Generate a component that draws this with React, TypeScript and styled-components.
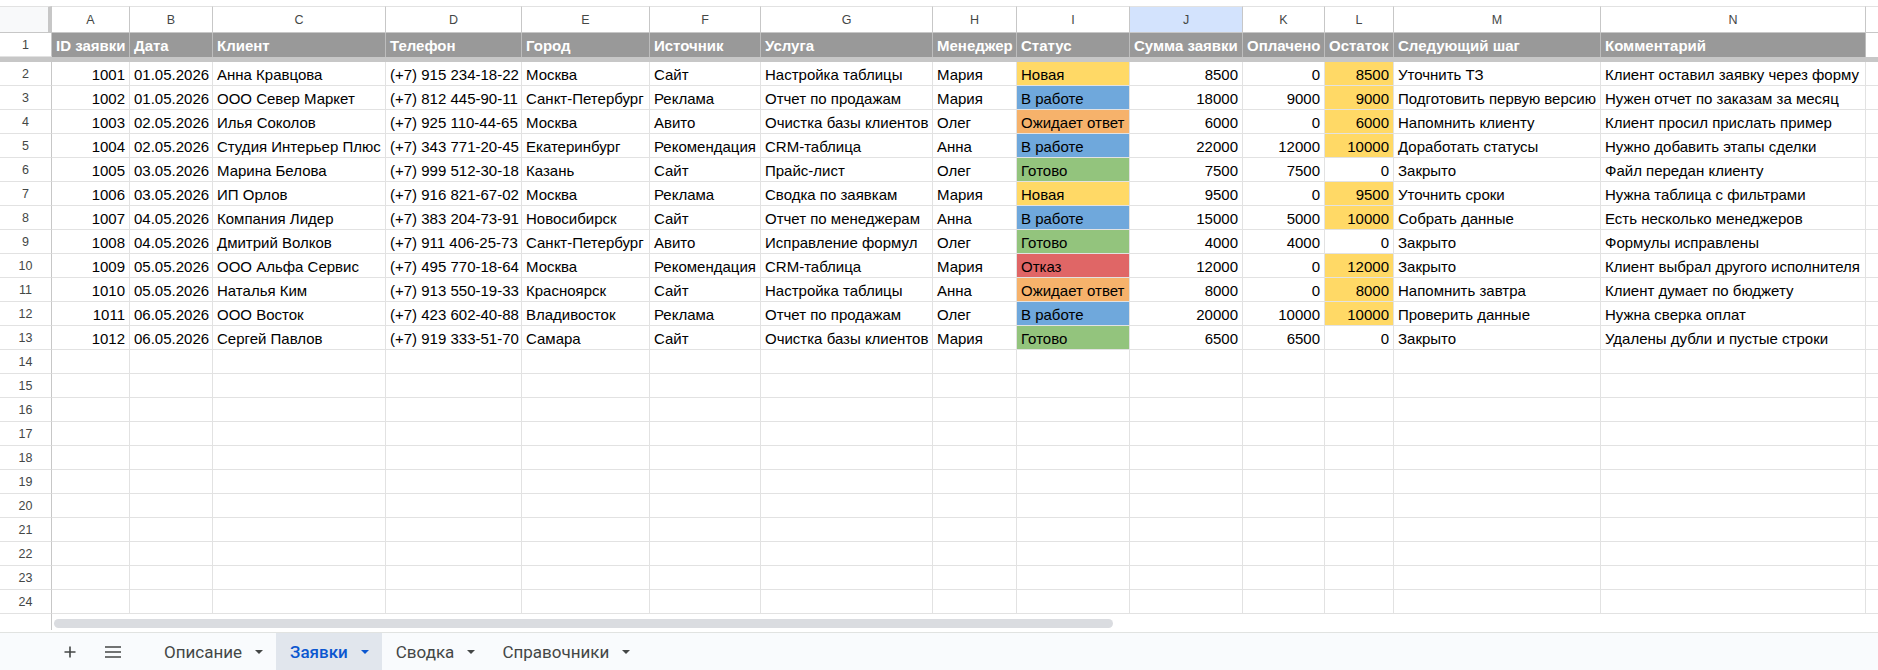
import React from "react"
import styled, { createGlobalStyle } from "styled-components"

const GlobalStyle = createGlobalStyle`
  html, body {
    margin: 0;
    padding: 0;
    background: #ffffff;
  }
  body {
    font-family: "Liberation Sans", Arial, sans-serif;
    overflow: hidden;
  }
`

type Status = "Новая" | "В работе" | "Ожидает ответ" | "Готово" | "Отказ"

type Deal = {
    id: number
    date: string
    client: string
    phone: string
    city: string
    source: string
    service: string
    manager: string
    status: Status
    sum: number
    paid: number
    next: string
    comment: string
}

const statusColors: Record<Status, string> = {
    "Новая": "#ffd966",
    "В работе": "#6fa8dc",
    "Ожидает ответ": "#f6b26b",
    "Готово": "#93c47d",
    "Отказ": "#e06666",
}

const debtColor = "#ffd966"

// last column only peeks out past the right edge, so its letter stays off screen
const letters = ["A", "B", "C", "D", "E", "F", "G", "H", "I", "J", "K", "L", "M", "N", ""]
const widths = [78, 83, 173, 136, 128, 111, 172, 84, 113, 113, 82, 69, 207, 265, 100]
const selectedColumn = "J"

const titles = [
    "ID заявки", "Дата", "Клиент", "Телефон", "Город", "Источник", "Услуга", "Менеджер",
    "Статус", "Сумма заявки", "Оплачено", "Остаток", "Следующий шаг", "Комментарий",
]

const deals: Deal[] = [
    { id: 1001, date: "01.05.2026", client: "Анна Кравцова", phone: "(+7) 915 234-18-22", city: "Москва", source: "Сайт", service: "Настройка таблицы", manager: "Мария", status: "Новая", sum: 8500, paid: 0, next: "Уточнить ТЗ", comment: "Клиент оставил заявку через форму" },
    { id: 1002, date: "01.05.2026", client: "ООО Север Маркет", phone: "(+7) 812 445-90-11", city: "Санкт-Петербург", source: "Реклама", service: "Отчет по продажам", manager: "Мария", status: "В работе", sum: 18000, paid: 9000, next: "Подготовить первую версию", comment: "Нужен отчет по заказам за месяц" },
    { id: 1003, date: "02.05.2026", client: "Илья Соколов", phone: "(+7) 925 110-44-65", city: "Москва", source: "Авито", service: "Очистка базы клиентов", manager: "Олег", status: "Ожидает ответ", sum: 6000, paid: 0, next: "Напомнить клиенту", comment: "Клиент просил прислать пример" },
    { id: 1004, date: "02.05.2026", client: "Студия Интерьер Плюс", phone: "(+7) 343 771-20-45", city: "Екатеринбург", source: "Рекомендация", service: "CRM-таблица", manager: "Анна", status: "В работе", sum: 22000, paid: 12000, next: "Доработать статусы", comment: "Нужно добавить этапы сделки" },
    { id: 1005, date: "03.05.2026", client: "Марина Белова", phone: "(+7) 999 512-30-18", city: "Казань", source: "Сайт", service: "Прайс-лист", manager: "Олег", status: "Готово", sum: 7500, paid: 7500, next: "Закрыто", comment: "Файл передан клиенту" },
    { id: 1006, date: "03.05.2026", client: "ИП Орлов", phone: "(+7) 916 821-67-02", city: "Москва", source: "Реклама", service: "Сводка по заявкам", manager: "Мария", status: "Новая", sum: 9500, paid: 0, next: "Уточнить сроки", comment: "Нужна таблица с фильтрами" },
    { id: 1007, date: "04.05.2026", client: "Компания Лидер", phone: "(+7) 383 204-73-91", city: "Новосибирск", source: "Сайт", service: "Отчет по менеджерам", manager: "Анна", status: "В работе", sum: 15000, paid: 5000, next: "Собрать данные", comment: "Есть несколько менеджеров" },
    { id: 1008, date: "04.05.2026", client: "Дмитрий Волков", phone: "(+7) 911 406-25-73", city: "Санкт-Петербург", source: "Авито", service: "Исправление формул", manager: "Олег", status: "Готово", sum: 4000, paid: 4000, next: "Закрыто", comment: "Формулы исправлены" },
    { id: 1009, date: "05.05.2026", client: "ООО Альфа Сервис", phone: "(+7) 495 770-18-64", city: "Москва", source: "Рекомендация", service: "CRM-таблица", manager: "Мария", status: "Отказ", sum: 12000, paid: 0, next: "Закрыто", comment: "Клиент выбрал другого исполнителя" },
    { id: 1010, date: "05.05.2026", client: "Наталья Ким", phone: "(+7) 913 550-19-33", city: "Красноярск", source: "Сайт", service: "Настройка таблицы", manager: "Анна", status: "Ожидает ответ", sum: 8000, paid: 0, next: "Напомнить завтра", comment: "Клиент думает по бюджету" },
    { id: 1011, date: "06.05.2026", client: "ООО Восток", phone: "(+7) 423 602-40-88", city: "Владивосток", source: "Реклама", service: "Отчет по продажам", manager: "Олег", status: "В работе", sum: 20000, paid: 10000, next: "Проверить данные", comment: "Нужна сверка оплат" },
    { id: 1012, date: "06.05.2026", client: "Сергей Павлов", phone: "(+7) 919 333-51-70", city: "Самара", source: "Сайт", service: "Очистка базы клиентов", manager: "Мария", status: "Готово", sum: 6500, paid: 6500, next: "Закрыто", comment: "Удалены дубли и пустые строки" },
]

const totalRows = 24
const sheets = ["Описание", "Заявки", "Сводка", "Справочники"]
const activeSheet = "Заявки"

type Align = "left" | "right"
type CellData = { text: string; align: Align; fill?: string }

function dealCells(d: Deal): CellData[] {
    const left = d.sum - d.paid
    return [
        { text: String(d.id), align: "right" },
        { text: d.date, align: "left" },
        { text: d.client, align: "left" },
        { text: d.phone, align: "left" },
        { text: d.city, align: "left" },
        { text: d.source, align: "left" },
        { text: d.service, align: "left" },
        { text: d.manager, align: "left" },
        { text: d.status, align: "left", fill: statusColors[d.status] },
        { text: String(d.sum), align: "right" },
        { text: String(d.paid), align: "right" },
        { text: String(left), align: "right", fill: left > 0 ? debtColor : undefined },
        { text: d.next, align: "left" },
        { text: d.comment, align: "left" },
        { text: "", align: "left" },
    ]
}

export default function App() {
    const rows = Array.from({ length: totalRows - 1 }, (_, i) => {
        const deal = deals[i]
        return deal ? dealCells(deal) : widths.map(() => ({ text: "", align: "left" as Align }))
    })

    return (
        <Page>
            <GlobalStyle />
            <Sheet>
                <Grid>
                    <Corner />
                    {letters.map((l, i) => (
                        <ColLetter key={i} $active={l === selectedColumn}>{l}</ColLetter>
                    ))}

                    <RowNum>1</RowNum>
                    {widths.map((_, i) => (
                        <HeadCell key={i} $blank={!titles[i]}>{titles[i] ?? ""}</HeadCell>
                    ))}

                    <FreezeBar />

                    {rows.map((cells, r) => (
                        <React.Fragment key={r}>
                            <RowNum>{r + 2}</RowNum>
                            {cells.map((c, i) => (
                                <Cell key={i} $align={c.align} $fill={c.fill}>{c.text}</Cell>
                            ))}
                        </React.Fragment>
                    ))}
                </Grid>

                <ScrollRow>
                    <ScrollGutter />
                    <ScrollThumb />
                </ScrollRow>
            </Sheet>

            <TabBar>
                <IconButton aria-label="Добавить лист">
                    <svg width="14" height="14" viewBox="0 0 14 14">
                        <path d="M7 1.5v11M1.5 7h11" stroke="#444746" strokeWidth="1.6" fill="none" />
                    </svg>
                </IconButton>
                <IconButton aria-label="Все листы">
                    <svg width="18" height="14" viewBox="0 0 18 14">
                        <path d="M1 2h16M1 7h16M1 12h16" stroke="#444746" strokeWidth="1.6" fill="none" />
                    </svg>
                </IconButton>
                <Tabs>
                    {sheets.map(s => (
                        <Tab key={s} $active={s === activeSheet}>
                            <span>{s}</span>
                            <Caret $active={s === activeSheet} />
                        </Tab>
                    ))}
                </Tabs>
            </TabBar>
        </Page>
    )
}

const gridLine = "#e2e2e2"
const headerLine = "#c7c7c7"

const Page = styled.div`
    width: 100vw;
    height: 100vh;
    display: flex;
    flex-direction: column;
    overflow: hidden;
    background: #ffffff;
`

const Sheet = styled.div`
    flex: 1;
    min-height: 0;
    overflow: hidden;
    padding-top: 6px;
    display: flex;
    flex-direction: column;
`

const Grid = styled.div`
    display: grid;
    grid-template-columns: 52px ${widths.map(w => `${w}px`).join(" ")};
    grid-template-rows: 27px 24px 5px;
    grid-auto-rows: 24px;
    width: max-content;
    flex-shrink: 0;
`

const Corner = styled.div`
    box-sizing: border-box;
    background: #f8f9fa;
    border-top: 1px solid ${gridLine};
    border-right: 4px solid ${headerLine};
    border-bottom: 1px solid ${headerLine};
`

const ColLetter = styled.div<{ $active: boolean }>`
    box-sizing: border-box;
    display: flex;
    align-items: center;
    justify-content: center;
    background: ${p => (p.$active ? "#d3e3fd" : "#ffffff")};
    border-top: 1px solid ${gridLine};
    border-right: 1px solid ${headerLine};
    border-bottom: 1px solid ${headerLine};
    font-size: 12.5px;
    color: #444746;
`

const RowNum = styled.div`
    box-sizing: border-box;
    display: flex;
    align-items: center;
    justify-content: center;
    background: #ffffff;
    border-right: 1px solid ${headerLine};
    border-bottom: 1px solid ${gridLine};
    font-size: 12.5px;
    color: #444746;
`

const HeadCell = styled.div<{ $blank: boolean }>`
    box-sizing: border-box;
    display: flex;
    align-items: flex-end;
    padding: 0 4px 3px 4px;
    background: ${p => (p.$blank ? "#ffffff" : "#999999")};
    border-right: 1px solid ${p => (p.$blank ? gridLine : "#bdbdbd")};
    color: #ffffff;
    font-size: 15px;
    font-weight: 700;
    line-height: 17px;
    white-space: nowrap;
    overflow: hidden;
`

const FreezeBar = styled.div`
    grid-column: 1 / -1;
    background: ${headerLine};
`

const Cell = styled.div<{ $align: Align; $fill?: string }>`
    box-sizing: border-box;
    display: flex;
    align-items: flex-end;
    justify-content: ${p => (p.$align === "right" ? "flex-end" : "flex-start")};
    padding: 0 4px 2px 4px;
    background: ${p => p.$fill ?? "#ffffff"};
    border-right: 1px solid ${gridLine};
    border-bottom: 1px solid ${gridLine};
    color: #000000;
    font-size: 15px;
    line-height: 17px;
    white-space: nowrap;
    overflow: hidden;
`

const ScrollRow = styled.div`
    display: flex;
    height: 18px;
    flex-shrink: 0;
`

const ScrollGutter = styled.div`
    box-sizing: border-box;
    width: 52px;
    height: 16px;
    border-right: 1px solid ${headerLine};
`

const ScrollThumb = styled.div`
    width: 1059px;
    height: 9px;
    margin: 5px 0 0 2px;
    border-radius: 5px;
    background: #dadce0;
`

const TabBar = styled.div`
    box-sizing: border-box;
    height: 38px;
    flex-shrink: 0;
    display: flex;
    align-items: stretch;
    padding-left: 50px;
    background: #f9fbfd;
    border-top: 1px solid #e1e3e1;
`

const IconButton = styled.button`
    width: 40px;
    margin-right: 3px;
    padding: 0;
    border: none;
    background: transparent;
    display: flex;
    align-items: center;
    justify-content: center;
    cursor: pointer;
`

const Tabs = styled.div`
    display: flex;
    align-items: stretch;
    margin-left: 14px;
`

const Tab = styled.div<{ $active: boolean }>`
    display: flex;
    align-items: center;
    gap: 13px;
    padding: 0 13px 0 14px;
    background: ${p => (p.$active ? "#e1e6ed" : "transparent")};
    color: ${p => (p.$active ? "#0b57d0" : "#444746")};
    font-family: Roboto, "Liberation Sans", sans-serif;
    font-size: 17px;
    font-weight: ${p => (p.$active ? 500 : 400)};
    white-space: nowrap;
`

const Caret = styled.span<{ $active: boolean }>`
    width: 0;
    height: 0;
    border-left: 4px solid transparent;
    border-right: 4px solid transparent;
    border-top: 4px solid ${p => (p.$active ? "#0b57d0" : "#444746")};
`
